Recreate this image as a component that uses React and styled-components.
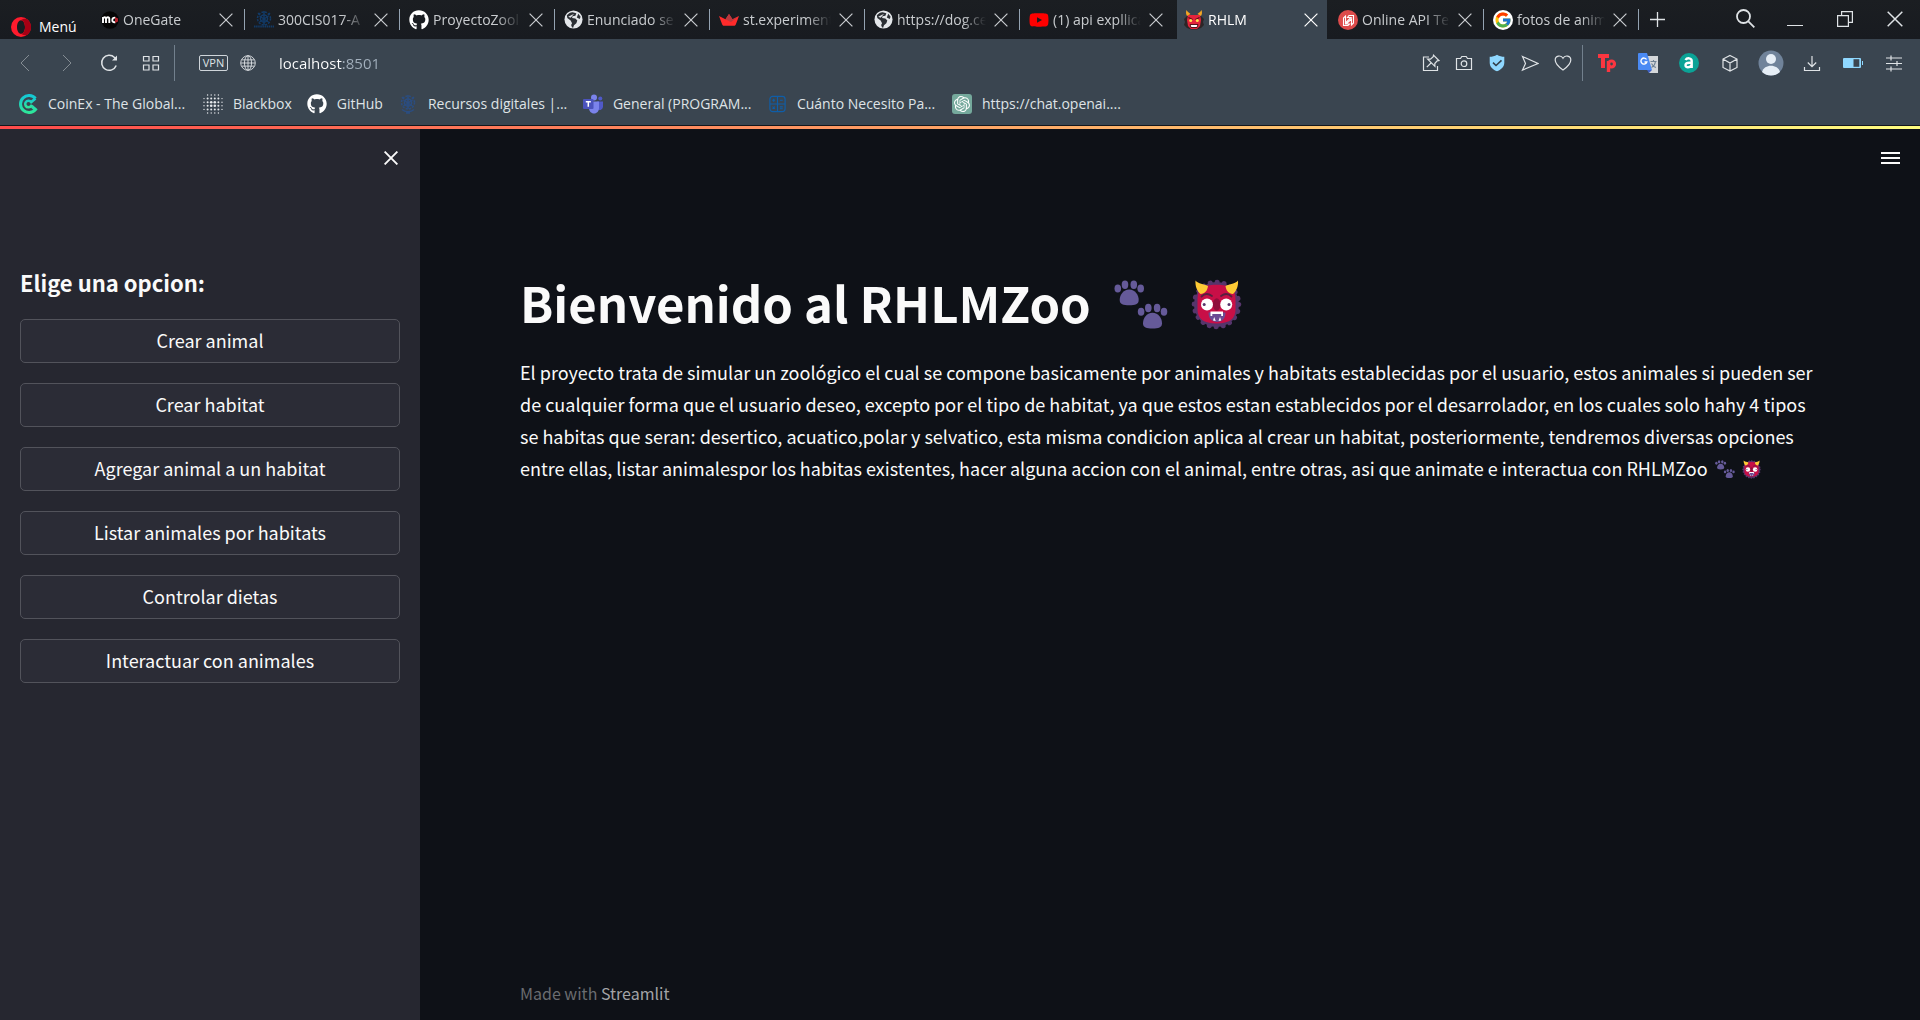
import React from "react";
import styled, { createGlobalStyle, css } from "styled-components";
import { FaGithub, FaYoutube } from "react-icons/fa";
import { FcGoogle } from "react-icons/fc";
import { SiOpenai } from "react-icons/si";

const sans = `"Noto Sans CJK SC", "Noto Sans CJK JP", sans-serif`;
const chromeFont = `"Open Sans", "Noto Sans", sans-serif`;

const Global = createGlobalStyle`
  *, *::before, *::after { box-sizing: border-box; }
  body { margin: 0; background: #0e1117; }
  button { font: inherit; color: inherit; border: 0; background: none; padding: 0; cursor: pointer; }
  a { color: inherit; text-decoration: none; }
  svg { display: block; flex: none; }
`;

const Page = styled.div`
  display: flex;
  flex-direction: column;
  min-height: 100vh;
`;

/* ---------- browser chrome ---------- */

const Chrome = styled.header`
  background: #3a4550;
  border-bottom: 1px solid #14171c;
  font-family: ${chromeFont};
  font-size: 14px;
  color: #dfe3e6;
`;

const TabStrip = styled.div`
  display: flex;
  height: 39px;
  background: linear-gradient(#1b1e22, #181b20);
`;

const MenuButton = styled.button`
  display: flex;
  align-items: center;
  gap: 8px;
  width: 90px;
  padding: 14px 0 0 11px !important;
  color: #fff;
`;

const Tabs = styled.nav`
  display: flex;
  flex: 1;
  min-width: 0;
`;

const Tab = styled.div`
  display: flex;
  align-items: center;
  position: relative;
  flex: 0 1 155px;
  min-width: 0;
  gap: 8px;
  padding: 0 12px 0 9px;
  color: #c9cccf;
  ${(p) =>
    p.$divided &&
    css`
      &::after {
        content: "";
        position: absolute;
        right: 0;
        top: 9px;
        bottom: 9px;
        width: 1px;
        background: #94a3b2;
      }
    `}
  ${(p) =>
    p.$active &&
    css`
      flex-basis: 150px;
      margin: 0 2px;
      padding: 0 9px 0 7px;
      background: #3a4550;
      color: #fff;
    `}
`;

const TabLink = styled.a`
  display: flex;
  align-items: center;
  gap: 4px;
  flex: 1;
  min-width: 0;
`;

const TabTitle = styled.span`
  flex: 1;
  overflow: hidden;
  white-space: nowrap;
  line-height: 24px;
  mask-image: linear-gradient(90deg, #000 calc(100% - 24px), transparent);
`;

const IconButton = styled.button`
  display: flex;
  align-items: center;
  justify-content: center;
  flex: none;
  width: ${(p) => p.$w || 14}px;
  height: ${(p) => p.$h || 38}px;
  opacity: ${(p) => (p.$dim ? 0.45 : 1)};
`;

const Toolbar = styled.div`
  display: flex;
  align-items: center;
  height: 48px;
  padding: 0 6px 0 4px;
`;

const Rule = styled.span`
  width: 1px;
  height: 36px;
  margin: 0 ${(p) => p.$gap}px;
  background: #72808d;
`;

const VpnButton = styled.button`
  width: 29px;
  height: 16px;
  margin: 0 12px 0 22px;
  border: 1px solid #cfd5da;
  border-radius: 2px;
  font-size: 11px;
  line-height: 14px;
`;

const Address = styled.input`
  flex: 1;
  min-width: 0;
  height: 32px;
  margin-left: 23px;
  padding: 0;
  border: 0;
  outline: 0;
  font-family: inherit;
  font-size: 15px;
  color: transparent;
  caret-color: #fff;
  background: linear-gradient(90deg, #fff 64px, #a3b0bd 64px);
  background-clip: text;
`;

const Bookmarks = styled.nav`
  display: flex;
  align-items: center;
  gap: 15px;
  height: 38px;
  padding: 0 18px 4px;
`;

const Bookmark = styled.a`
  display: flex;
  align-items: center;
  gap: 10px;
  white-space: nowrap;
`;

const BookmarkLabel = styled.span`
  line-height: 24px;
  width: ${(p) => (p.$long ? "140px" : "auto")};
`;

/* ---------- page ---------- */

const Decoration = styled.div`
  height: 3px;
  background: linear-gradient(90deg, #ff4b4b, #fffd80);
`;

const AppBody = styled.div`
  display: flex;
  flex: 1;
  font-family: ${sans};
  font-size: 18px;
  line-height: 32px;
  color: #fafafa;
`;

const Sidebar = styled.aside`
  flex: 0 0 420px;
  padding: 0 20px;
  background: #262730;
`;

const TopRow = styled.div`
  display: flex;
  align-items: center;
  justify-content: flex-end;
  height: 58px;
  padding: 0 ${(p) => p.$pad}px;
`;

const SideTitle = styled.h2`
  margin: 80px 0 22px;
  font-size: 22px;
  font-weight: 700;
  line-height: 30px;
`;

const Options = styled.div`
  display: grid;
  gap: 20px;
`;

const OptionButton = styled.button`
  height: 44px;
  padding-bottom: 2px !important;
  border: 1px solid #52535b;
  border-radius: 5px;
  background: #2b2c36;
`;

const Main = styled.main`
  display: flex;
  flex-direction: column;
  flex: 1;
  min-width: 0;
  background: #0e1117;
`;

const Article = styled.article`
  padding: 82px 100px 0;
`;

const Title = styled.h1`
  display: flex;
  align-items: center;
  margin: 0 0 21px;
  font-size: 49px;
  font-weight: 700;
  line-height: 66px;
  gap: 23px;

  svg { margin-top: 4px; }
`;

const Text = styled.p`
  margin: 0;

  svg {
    display: inline-block;
    vertical-align: -3px;
    margin-left: 3px;
  }
`;

const Footer = styled.footer`
  margin-top: auto;
  padding: 0 100px 11px;
  font-size: 16px;
  color: #6a6c70;

  a { color: #a3a4a7; }
`;

/* ---------- drawings ---------- */

const Line = ({ size = 18, w = 1, box = 18, children }) => (
  <svg width={size} height={size} viewBox={`0 0 ${box} ${box}`} fill="none" stroke="currentColor" strokeWidth={w} aria-hidden="true">
    {children}
  </svg>
);

const Cross = ({ size = 14, w = 1.2 }) => (
  <Line size={size} box={14} w={w}><path d="M.6.6l12.8 12.8M13.4.6L.6 13.4" /></Line>
);

const Opera = () => (
  <svg width="20" height="20" viewBox="0 0 20 20" aria-hidden="true">
    <path fillRule="evenodd" fill="#ff1b2d" d="M10 0a10 10 0 100 20 10 10 0 000-20zm0 3.2c2.3 0 4 3 4 6.8s-1.700 6.800-4 6.800-4-3-4-6.800 1.700-6.800 4-6.800z" />
    <path fill="#a70014" d="M10 0c2.600 0 5 1 6.800 2.600A10 10 0 0116.800 17.400c-2.300 1.500-5 .8-6.800-.6 2.300 0 4-3 4-6.800s-1.700-6.800-4-6.800C11.800 1.800 14.500 1.100 16.800 2.600 15 1 12.600 0 10 0z" />
  </svg>
);

const OneGate = () => (
  <svg width="20" height="20" viewBox="0 0 20 20" aria-hidden="true">
    <circle cx="11" cy="10" r="8.800" fill="#050505" />
    <path d="M4 13V7M4 8.500c1-1.800 3-1.800 3 .3V13M7 8.500c1-1.800 3.300-1.800 3.300.3V13" stroke="#fff" strokeWidth="1.900" fill="none" />
    <path d="M16.500 7.800c-3.800-1.400-4.700 5.700 0 4.300" stroke="#fff" strokeWidth="1.900" fill="none" />
    <path d="M16 7l3 1.500v3L16 13z" fill="#b3202b" />
  </svg>
);

const Javeriana = ({ color = "#123a66", base }) => (
  <svg width="20" height="20" viewBox="0 0 20 20" fill="none" stroke={color} strokeWidth="1.500" aria-hidden="true">
    <circle cx="10" cy="8.500" r="6.500" strokeDasharray="2.200 1.200" />
    <circle cx="10" cy="8.500" r="3.600" />
    <path d="M10 1v14M5.500 6l9 6M14.500 6l-9 6M4 3l2 2M16 3l-2 2" />
    {base ? <path d="M0 16.500h20" strokeWidth="2" strokeDasharray="1.500 .6" /> : <path d="M4 15.500c3 3 9 3 12 0M8 19h4" />}
  </svg>
);

const Globe = () => (
  <svg width="19" height="19" viewBox="0 0 20 20" aria-hidden="true">
    <circle cx="10" cy="10" r="9.500" fill="#e4e7ea" />
    <path fill="#2b2f34" d="M3 5.500C5.500 3 7.500 2 10 2.500l3 1-1 2.500-3 .5-.500 2 3.500.5 2 2-1 3-2.500 2-1 3C7 17 7.500 15 8.500 14L7 11 3.500 8.500zM15 4l2.500 3-1 2.500-3-1.500z" />
    <path fill="#e4e7ea" d="M4.500 7l4-2 2-.8-3.500 4z" />
  </svg>
);

const Streamlit = () => (
  <svg width="20" height="20" viewBox="0 0 20 20" aria-hidden="true">
    <path fill="#ff2b2b" d="M0 6l6.500 3.300L10 4l3.500 5.300L20 6l-3.200 8.500c-.4.900-1 1.200-1.800 1.200H5c-.8 0-1.400-.3-1.800-1.200z" />
    <path fill="#b83a3f" d="M6.500 9.300L10 4l3.500 5.300L10 11zM20 6l-6.500 3.300-3.500 1.900 2 .9z" />
  </svg>
);

const RedOgre = () => (
  <svg width="20" height="20" viewBox="0 0 20 20" aria-hidden="true">
    <path fill="#2c2526" d="M3 6L0 9l1 3-1 3 3 3 4 1.500h6l4-1.500 3-3-1-3 1-3-3-3z" />
    <path fill="#e5243b" d="M4 5h12l1 5-1 6-3 3H7l-3-3-1-6z" />
    <path fill="#f5a623" d="M3 6C1.500 3.500 2 1.500 2.500 0c1 2 2.500 2.500 4 4zM17 6c1.500-2.500 1-4.500.5-6-1 2-2.500 2.500-4 4z" />
    <path d="M4.500 7.500l4 2M15.500 7.500l-4 2" stroke="#5b1019" strokeWidth="1.300" />
    <circle cx="6.700" cy="10.500" r="1.500" fill="#ffe14d" /><circle cx="13.300" cy="10.500" r="1.500" fill="#ffe14d" />
    <path d="M6 14.500h8l-1 3H7z" fill="#fff" stroke="#5b1019" />
  </svg>
);

const ApiTester = () => (
  <svg width="20" height="20" viewBox="0 0 20 20" aria-hidden="true">
    <circle cx="10" cy="10" r="10" fill="#dd4b4b" />
    <path d="M5.500 15.500V8l2-2v7L13 7.500H9.500l1.500-2h4.500V13l-2 2V9L8 14h3.500l-1.500 1.500z" fill="none" stroke="#fff" strokeWidth="1.100" />
  </svg>
);

const GoogleMark = () => (
  <svg width="20" height="20" viewBox="0 0 20 20" aria-hidden="true">
    <circle cx="10" cy="10" r="10" fill="#fff" />
    <FcGoogle x="1" y="1" size={18} />
  </svg>
);

const CoinEx = () => (
  <svg width="20" height="20" viewBox="0 0 20 20" fill="none" strokeWidth="3" aria-hidden="true">
    <defs><linearGradient id="cx" x1="0" y1="0" x2="0" y2="1"><stop stopColor="#14c8d4" /><stop offset="1" stopColor="#2ee69a" /></linearGradient></defs>
    <path stroke="url(#cx)" d="M17.500 4.500A8.500 8.500 0 1017.500 15.500l-3.500-3" />
    <path stroke="url(#cx)" strokeWidth="2.600" d="M17.500 4.500l-4.300 3.600A3.300 3.300 0 1010.500 13.300c2 0 2.800-1 3.500-2.500" />
  </svg>
);

const dots = [1, 4.600, 8.200, 11.800, 15.400, 19];
const Blackbox = () => (
  <svg width="20" height="20" viewBox="0 0 20 20" fill="#e6e9ec" aria-hidden="true">
    {dots.map((x) =>
      dots.map((y) => {
        const d = Math.hypot(x - 10, y - 10);
        return d > 11 ? null : <circle key={`${x}-${y}`} cx={x} cy={y} r={d < 4 ? 1.300 : d < 8 ? 1 : 0.700} />;
      })
    )}
  </svg>
);

const Teams = () => (
  <svg width="20" height="20" viewBox="0 0 20 20" aria-hidden="true">
    <circle cx="11" cy="3.500" r="3" fill="#7b83eb" /><circle cx="17.300" cy="4.500" r="2" fill="#5059c9" />
    <path fill="#5059c9" d="M14 7.500h6v5.500a3.500 3.500 0 01-6 2z" />
    <path fill="#7b83eb" d="M7 7.500h9V14c0 3-2 5.500-5 5.500S6 17 6 14z" />
    <rect y="5" width="10.500" height="10" rx="1" fill="#4b53bc" />
    <path d="M2.800 7.700h5M5.300 7.700v5" stroke="#fff" strokeWidth="1.500" />
  </svg>
);

const Calculator = () => (
  <svg width="19" height="20" viewBox="0 0 20 20" fill="none" stroke="#0f5ea8" strokeWidth="1.200" aria-hidden="true">
    <rect x="2" y="2" width="16" height="16" rx="3" /><path d="M10 2v16M2 10h16M4.500 6h3M6 4.500v3M12.500 6h3M4.800 12.800l2.400 2.400M7.200 12.800l-2.400 2.400M12.500 13h3M12.500 15h3" />
  </svg>
);

const OpenAiMark = () => (
  <svg width="20" height="20" viewBox="0 0 20 20" aria-hidden="true">
    <rect width="20" height="20" rx="3" fill="#75a99c" />
    <SiOpenai x="2" y="2" size={16} color="#fff" />
  </svg>
);

const TwinPaws = ({ size }) => (
  <svg width={size} height={size} viewBox="9 9.500 54 54" fill="#655a99" role="img" aria-label="huellas">
    {[0, 23.300].map((d) => (
      <g key={d} transform={`translate(${d} ${d})`}>
        <ellipse cx="12.800" cy="21" rx="3.300" ry="4" /><ellipse cx="20" cy="17.200" rx="3.300" ry="4.200" />
        <ellipse cx="28.800" cy="17.200" rx="3.300" ry="4.200" /><ellipse cx="35.700" cy="21" rx="3.300" ry="4" />
        <path d="M24.200 22c6 0 9.500 5.500 9.500 10.500 0 4.500-3.500 5.200-9.500 5.200s-9.500-.7-9.500-5.200c0-5 3.500-10.500 9.500-10.500z" />
      </g>
    ))}
  </svg>
);

const Ogre = ({ size }) => (
  <svg width={size} height={size} viewBox="85.500 8.500 51 51" role="img" aria-label="ogro">
    <circle cx="111" cy="34" r="22.500" fill="#56356b" />
    <circle cx="111" cy="34" r="22.300" fill="none" stroke="#56356b" strokeWidth="5" strokeDasharray=".1 6.900" strokeLinecap="round" />
    <path fill="#c80f47" d="M98 16c8-2.500 18-2.500 26 0 5 2 6 8 6 14v9c0 9-6 14-19 14s-19-5-19-14v-9c0-6 1-12 6-14z" />
    <path fill="#fdcb35" d="M90 10c3 3.500 8 3.500 12.500 5.500-.5 4.500-3 7.500-7.500 8-3.500-3-5.500-8-5-13.500zM132.500 10c-3 3.500-8 3.500-12.500 5.500.5 4.500 3 7.500 7.500 8 3.500-3 5.500-8 5-13.500z" />
    <path fill="none" stroke="#56203f" strokeWidth="1.800" strokeLinecap="round" d="M96 26c3-3 7-3 10.500-.5M126 26c-3-3-7-3-10.500-.5" />
    <ellipse cx="111.200" cy="34" rx="3.800" ry="6.200" fill="#8f0e3b" />
    <circle cx="101.500" cy="34" r="6" fill="#fff" /><circle cx="120.700" cy="34" r="6" fill="#fff" />
    <circle cx="98.700" cy="34" r="1.500" fill="#56356b" /><circle cx="123.500" cy="34" r="1.500" fill="#56356b" />
    <path fill="#6c4b93" d="M103 42h17c0 6-3.500 9.500-8.500 9.500S103 48 103 42z" />
    <path fill="#fff" d="M105 41h12.500v4.500h-1.800v-2h-8.900v2H105zM107.500 50l1.200-3.500 1.500 4zM113 50.500l1.500-4 1.200 3.500z" />
  </svg>
);

const Search = () => (<Line size={20} box={20} w={1.800}><circle cx="8.500" cy="7.500" r="6.500" /><path d="M13.300 12.300l6 6" /></Line>);
const Minimize = () => (<Line size={16} box={16}><path d="M0 14.500h16" /></Line>);
const Restore = () => (<Line size={16} box={16} w={1.200}><path d="M.6 4.600h10.800v10.800H.6zM4.600 4.600v-4h10.800v10.800h-4" /></Line>);
const Back = () => (<Line><path d="M13 1L5 9l8 8" /></Line>);
const Forward = () => (<Line><path d="M5 1l8 8-8 8" /></Line>);
const Reload = () => (<Line w={1.500}><path d="M16.200 11.500A7.500 7.500 0 1114.500 3.500L16 5" /><path d="M17 1.500v5h-5z" fill="currentColor" stroke="none" /></Line>);
const Grid = () => (<Line w={1.200}><path d="M1.500 2.500h5.500v4.500H1.500zM11 2.500h5.500v4.500H11zM1.500 11h5.500v5H1.500zM11 11h5.500v5H11z" /></Line>);
const Web = () => (<Line size={16}><circle cx="9" cy="9" r="8.200" /><ellipse cx="9" cy="9" rx="4" ry="8.200" /><path d="M9 1v16M1 9h16M2 5.500h14M2 12.500h14" /></Line>);
const Pin = () => (<Line w={1.200}><path d="M7 3H1.500v13.500h14V12" /><path d="M11.500 1.200l5.300 5.300-1.600.3-2.400 2.700.1 2.800-7.200-7.200 2.800.1 2.700-2.400zM9 9l-4.200 4.200" /></Line>);
const Camera = () => (<Line w={1.200}><path d="M1.500 4.500h4l1.300-2h4.400l1.300 2h4v11H1.500z" /><circle cx="9" cy="9.700" r="2.800" /></Line>);
const Shield = () => (
  <svg width="18" height="18" viewBox="0 0 18 18" aria-hidden="true">
    <path fill="#8fd8ff" d="M9 .8c2.400 1.400 4.800 2 7.300 2v6c0 4.200-3.500 7.200-7.300 8.500C5.200 16 1.700 13 1.700 8.800v-6c2.500 0 4.900-.6 7.300-2z" />
    <path d="M5 8.700l3 2.800 5.500-5.200" fill="none" stroke="#33404b" strokeWidth="1.600" />
  </svg>
);
const Send = () => (<Line w={1.200}><path d="M1.500 2.500L17 9.500 1.500 16l3-6.500z" /></Line>);
const Heart = () => (<Line w={1.200}><path d="M9 16C4 12.500 1.200 9.500 1.200 6 1.200 1.700 7 .500 9 4.300c2-3.800 7.800-2.600 7.800 1.700 0 3.500-2.800 6.500-7.800 10z" /></Line>);
const ToolPad = () => (
  <svg width="20" height="20" viewBox="0 0 20 20" fill="none" stroke="#fb3640" strokeWidth="4" aria-hidden="true">
    <path d="M1 3h11M6 3v12" /><path strokeWidth="3.400" d="M11.500 19V8" /><circle cx="14.500" cy="11" r="3" strokeWidth="3.200" />
  </svg>
);
const Translate = () => (
  <svg width="20" height="20" viewBox="0 0 20 20" aria-hidden="true">
    <path fill="#d4d7da" d="M9 3h11v17h-9z" /><path fill="#3c5fc4" d="M9 17h5l-3 3z" />
    <path fill="#4a8af4" d="M0 1a1 1 0 011-1h8l5 17H1a1 1 0 01-1-1z" />
    <path d="M8.500 6.500a3 3 0 10.300 2.500H6.500" fill="none" stroke="#fff" strokeWidth="1.400" />
    <path d="M12.500 8.500h6M15.500 7v1.500M17.500 8.500c-.5 3-2 5-4 6M13.500 10.500c1 2 2.500 3.500 4.500 4" fill="none" stroke="#6f8294" strokeWidth="1.100" />
  </svg>
);
const Amazon = () => (
  <svg width="20" height="20" viewBox="0 0 20 20" aria-hidden="true">
    <circle cx="10" cy="10" r="10" fill="#0ba396" />
    <path d="M6.500 7c1.500-2.500 6.200-2.200 6.200 1v7M12.500 9.500c-2.500 0-6 .2-6 2.700 0 2.800 4.500 2.800 6-.2" fill="none" stroke="#fff" strokeWidth="2.400" />
  </svg>
);
const Cube = () => (<Line w={1.200}><path d="M9 1.500l7 3.500v8.500L9 17l-7-3.500V5zM2 5l7 4 7-4M9 9v8" /></Line>);
const Avatar = () => (
  <svg width="26" height="26" viewBox="0 0 26 26" aria-hidden="true">
    <circle cx="13" cy="13" r="12.500" fill="#70839a" />
    <circle cx="13" cy="9" r="5" fill="#e6eef6" /><path d="M4 22c2-8.500 16-8.500 18 0-5 4.700-13 4.700-18 0z" fill="#e6eef6" />
  </svg>
);
const Download = () => (<Line w={1.200}><path d="M9 2v10.500M4.800 8.500L9 12.700l4.200-4.200M1.500 13v3.500h15V13" /></Line>);
const Battery = () => (
  <svg width="20" height="12" viewBox="0 0 20 12" aria-hidden="true">
    <path fill="#8fd8ff" d="M1 1h16a1 1 0 011 1v8a1 1 0 01-1 1H1a1 1 0 01-1-1V2a1 1 0 011-1zM19 4h1v4h-1z" />
    <path fill="#3a4550" d="M10.500 2.200h5.800v7.600h-5.800z" />
  </svg>
);
const Sliders = () => (<Line w={1.200}><path d="M1 4h16M1 9.500h16M1 15h16M6 1.500v5M12 7v5M6 12.500v5" /></Line>);
const Plus = () => (<Line size={15} box={15} w={1.300}><path d="M7.500 0v15M0 7.500h15" /></Line>);
const Burger = () => (<Line size={20} box={20} w={2}><path d="M1 5h19M1 10h19M1 15h19" /></Line>);

/* ---------- data ---------- */

const tabs = [
  { title: "OneGate", icon: <OneGate /> },
  { title: "300CIS017-A", icon: <Javeriana base /> },
  { title: "ProyectoZool", icon: <FaGithub size={20} color="#fff" /> },
  { title: "Enunciado se", icon: <Globe /> },
  { title: "st.experiment", icon: <Streamlit /> },
  { title: "https://dog.ce", icon: <Globe /> },
  { title: "(1) api expllica", icon: <FaYoutube size={20} color="#f00" /> },
  { title: "RHLM", icon: <RedOgre />, active: true },
  { title: "Online API Te", icon: <ApiTester /> },
  { title: "fotos de anim", icon: <GoogleMark /> },
];

const bookmarks = [
  { label: "CoinEx - The Global...", icon: <CoinEx />, long: true },
  { label: "Blackbox", icon: <Blackbox /> },
  { label: "GitHub", icon: <FaGithub size={20} color="#fff" /> },
  { label: "Recursos digitales |...", icon: <Javeriana color="#2b4d80" />, long: true },
  { label: "General (PROGRAM...", icon: <Teams />, long: true },
  { label: "Cuánto Necesito Pa...", icon: <Calculator />, long: true },
  { label: "https://chat.openai....", icon: <OpenAiMark />, long: true },
];

const windowControls = [
  ["Buscar", <Search />], ["Minimizar", <Minimize />], ["Restaurar", <Restore />], ["Cerrar", <Cross size={16} w={1.300} />],
];
const pageActions = [
  ["Fijar", <Pin />], ["Instantánea", <Camera />], ["Bloqueador", <Shield />], ["Enviar", <Send />], ["Favorito", <Heart />],
];
const extensions = [
  ["Toolpad", <ToolPad />], ["Traductor", <Translate />], ["Asistente", <Amazon />], ["Extensiones", <Cube />],
  ["Perfil", <Avatar />], ["Descargas", <Download />], ["Batería", <Battery />], ["Configuración", <Sliders />],
];
const options = [
  "Crear animal", "Crear habitat", "Agregar animal a un habitat",
  "Listar animales por habitats", "Controlar dietas", "Interactuar con animales",
];

const ButtonRow = ({ items, w }) =>
  items.map(([name, icon]) => (
    <IconButton key={name} $w={w} aria-label={name}>{icon}</IconButton>
  ));

export default function App() {
  const activeIndex = tabs.findIndex((t) => t.active);
  return (
    <Page>
      <Global />
      <Chrome>
        <TabStrip>
          <MenuButton><Opera />Menú</MenuButton>
          <Tabs aria-label="Pestañas">
            {tabs.map((t, i) => (
              <Tab key={t.title} $active={t.active} $divided={!t.active && i !== activeIndex - 1}>
                <TabLink href="#">{t.icon}<TabTitle>{t.title}</TabTitle></TabLink>
                <IconButton aria-label={`Cerrar ${t.title}`}><Cross /></IconButton>
              </Tab>
            ))}
            <IconButton $w={36} aria-label="Nueva pestaña"><Plus /></IconButton>
          </Tabs>
          <ButtonRow items={windowControls} w={50} />
        </TabStrip>
        <Toolbar>
          <IconButton $w={42} $dim aria-label="Atrás"><Back /></IconButton>
          <IconButton $w={42} $dim aria-label="Adelante"><Forward /></IconButton>
          <IconButton $w={42} aria-label="Recargar"><Reload /></IconButton>
          <IconButton $w={42} aria-label="Inicio"><Grid /></IconButton>
          <Rule $gap={2} />
          <VpnButton>VPN</VpnButton>
          <Web />
          <Address type="text" aria-label="Dirección" defaultValue="localhost:8501" spellCheck="false" />
          <ButtonRow items={pageActions} w={33} />
          <Rule $gap={3} />
          <ButtonRow items={extensions} w={41} />
        </Toolbar>
        <Bookmarks aria-label="Marcadores">
          {bookmarks.map((b) => (
            <Bookmark key={b.label} href="#">{b.icon}<BookmarkLabel $long={b.long}>{b.label}</BookmarkLabel></Bookmark>
          ))}
        </Bookmarks>
      </Chrome>
      <Decoration />
      <AppBody>
        <Sidebar>
          <TopRow $pad={2}>
            <IconButton aria-label="Cerrar panel"><Cross w={1.900} /></IconButton>
          </TopRow>
          <SideTitle>Elige una opcion:</SideTitle>
          <Options>
            {options.map((o) => <OptionButton key={o}>{o}</OptionButton>)}
          </Options>
        </Sidebar>
        <Main>
          <TopRow $pad={20}>
            <IconButton $w={20} aria-label="Menú principal"><Burger /></IconButton>
          </TopRow>
          <Article>
            <Title>Bienvenido al RHLMZoo <TwinPaws size={54} /><Ogre size={51} /></Title>
            <Text>
              El proyecto trata de simular un zoológico el cual se compone basicamente por animales y habitats
              establecidas por el usuario, estos animales si pueden ser de cualquier forma que el usuario deseo,
              excepto por el tipo de habitat, ya que estos estan establecidos por el desarrolador, en los cuales
              solo hahy 4 tipos se habitas que seran: desertico, acuatico,polar y selvatico, esta misma condicion
              aplica al crear un habitat, posteriormente, tendremos diversas opciones entre ellas, listar
              animalespor los habitas existentes, hacer alguna accion con el animal, entre otras, asi que animate e
              interactua con RHLMZoo <TwinPaws size={20} /> <Ogre size={19} />
            </Text>
          </Article>
          <Footer>Made with <a href="https://streamlit.io">Streamlit</a></Footer>
        </Main>
      </AppBody>
    </Page>
  );
}
